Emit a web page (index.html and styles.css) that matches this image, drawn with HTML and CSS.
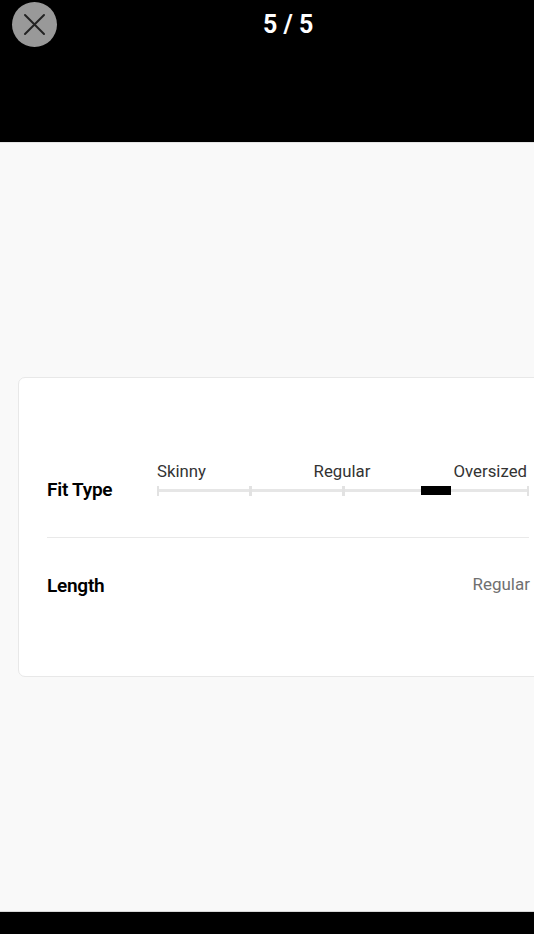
FILE: index.html
```html
<!DOCTYPE html>
<html lang="en">
<head>
    <meta charset="UTF-8">
    <meta name="viewport" content="width=device-width, initial-scale=1.0">
    <title>Product Gallery</title>
    <link rel="stylesheet" href="styles.css">
</head>
<body>
    <header class="viewer-header">
        <button class="close-btn" aria-label="Close">
            <svg width="45" height="45" viewBox="0 0 45 45" fill="none" stroke="#222" stroke-width="2" stroke-linecap="round">
                <path d="M13 13l19 19M32 13l-19 19" />
            </svg>
        </button>
        <span class="counter">5 / 5</span>
    </header>

    <main class="slide">
        <section class="fit-card">
            <div class="fit-row fit-type">
                <h2 class="fit-title">Fit Type</h2>
                <div class="scale">
                    <div class="scale-labels">
                        <span>Skinny</span>
                        <span>Regular</span>
                        <span>Oversized</span>
                    </div>
                    <div class="scale-track">
                        <i class="tick"></i>
                        <i class="tick"></i>
                        <i class="tick"></i>
                        <i class="marker"></i>
                        <i class="tick"></i>
                    </div>
                </div>
            </div>
            <div class="fit-row fit-length">
                <h2 class="fit-title">Length</h2>
                <span class="fit-value">Regular</span>
            </div>
        </section>
    </main>
</body>
</html>
```

FILE: styles.css
```css
* {
    box-sizing: border-box;
}

body {
    margin: 0;
    height: 934px;
    overflow: hidden;
    background: #000;
    font-family: Roboto, "Liberation Sans", sans-serif;
}

.viewer-header {
    display: grid;
    grid-template-columns: 45px 1fr;
    align-items: start;
    height: 142px;
    padding: 2px 14px 0 12px;
    color: #fff;
}

.close-btn {
    width: 45px;
    height: 45px;
    padding: 0;
    border: 0;
    border-radius: 50%;
    background: #999;
}

.close-btn svg {
    display: block;
}

.counter {
    padding-left: 206px;
    font-size: 25px;
    font-weight: 700;
    line-height: 45px;
}

.slide {
    height: 770px;
    padding: 234px 0 0 18px;
    border-top: 1px solid #e4e4e4;
    border-bottom: 1px solid #d8d8d8;
    background: #f9f9f9;
}

.fit-card {
    width: 540px;
    height: 300px;
    padding: 80px 0 0 28px;
    border: 1px solid #e8e8e8;
    border-radius: 7px;
    background: #fff;
}

.fit-row {
    display: flex;
    width: 482px;
}

.fit-title {
    margin: 0;
    color: #000;
    font-size: 19px;
    font-weight: 600;
    line-height: 24px;
    letter-spacing: -0.25px;
}

.fit-type {
    height: 80px;
    border-bottom: 1px solid #e9e9e9;
}

.fit-type .fit-title {
    width: 110px;
    padding-top: 20px;
}

.scale {
    flex: 1;
}

.scale-labels {
    display: grid;
    grid-template-columns: 1fr auto 1fr;
    padding: 3px 2px 0 0;
    color: #333;
    font-size: 16.8px;
    line-height: 20px;
}

.scale-labels span:last-child {
    text-align: right;
}

.scale-track {
    display: flex;
    align-items: flex-start;
    justify-content: space-between;
    height: 10px;
    margin-top: 5px;
    background: linear-gradient(#e6e6e6, #e6e6e6) 0 3px / 100% 3px no-repeat;
}

.tick {
    width: 3px;
    height: 10px;
    background: #e2e2e2;
}

.tick:first-child,
.tick:last-child {
    width: 2px;
}

/* takes the room of one tick, so the others stay evenly spaced */
.marker {
    width: 30px;
    height: 9px;
    margin: 0 -13.5px;
    background: #000;
}

.fit-length {
    justify-content: space-between;
    padding-top: 35px;
}

.fit-length .fit-title {
    padding-top: 1px;
}

.fit-value {
    margin-right: -1px;
    color: #707070;
    font-size: 17px;
    line-height: 23px;
}
```
